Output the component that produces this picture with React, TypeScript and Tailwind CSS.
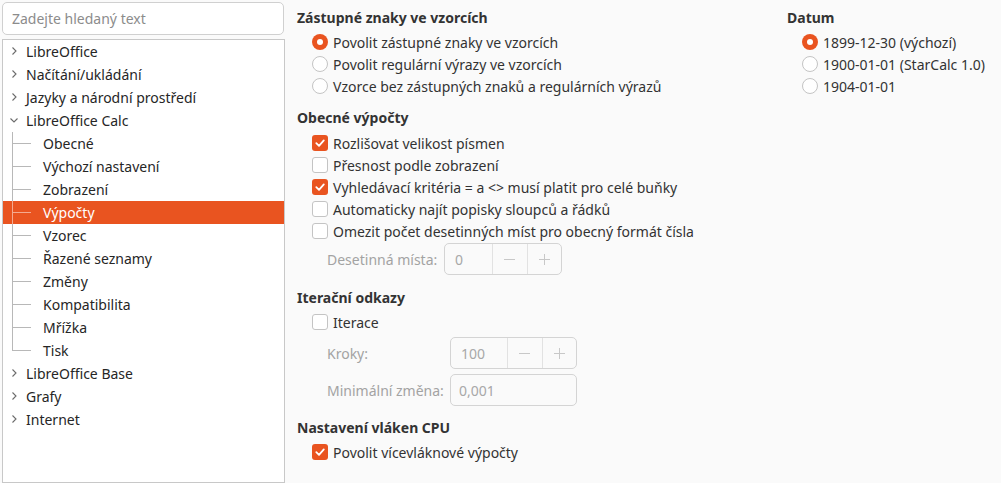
import React from 'react';

const ORANGE = 'bg-[#e95420]';

function Chevron({ open }: { open?: boolean }) {
  return (
    <svg width="10" height="10" viewBox="0 0 10 10" className="shrink-0">
      {open ? (
        <path d="M1.5 3.5 L5 7 L8.5 3.5" fill="none" stroke="#6b6b6b" strokeWidth="1.1" />
      ) : (
        <path d="M3.5 1.5 L7 5 L3.5 8.5" fill="none" stroke="#6b6b6b" strokeWidth="1.1" />
      )}
    </svg>
  );
}

function TopRow({ label, open }: { label: string; open?: boolean }) {
  return (
    <div className="flex h-[23px] items-center pl-[6px] text-[#262626]">
      <Chevron open={open} />
      <span className="ml-[7px]">{label}</span>
    </div>
  );
}

function ChildRow({ label, last, active }: { label: string; last?: boolean; active?: boolean }) {
  const line = active ? 'bg-white/50' : 'bg-[#b8b8b8]';
  return (
    <div className={`relative flex h-[23px] items-center ${active ? ORANGE + ' text-white' : 'text-[#262626]'}`}>
      <div className={`absolute left-[9px] top-0 w-px ${line} ${last ? 'h-[12px]' : 'h-full'}`} />
      <div className={`absolute left-[10px] top-[11px] h-px w-[18px] ${line}`} />
      <span className="ml-[40px]">{label}</span>
    </div>
  );
}

function Radio({ checked, label }: { checked?: boolean; label: string }) {
  return (
    <div className="flex h-[22px] items-center gap-[5px]">
      {checked ? (
        <span className={`flex h-[16px] w-[16px] items-center justify-center rounded-full ${ORANGE}`}>
          <span className="h-[6px] w-[6px] rounded-full bg-white" />
        </span>
      ) : (
        <span className="h-[16px] w-[16px] rounded-full border border-[#c4c4c4] bg-white" />
      )}
      <span>{label}</span>
    </div>
  );
}

function Check({ checked, label }: { checked?: boolean; label: string }) {
  return (
    <div className="flex h-[22px] items-center gap-[5px] whitespace-nowrap">
      {checked ? (
        <span className={`flex h-[16px] w-[16px] items-center justify-center rounded-[3px] ${ORANGE}`}>
          <svg width="12" height="12" viewBox="0 0 12 12">
            <path d="M2.3 6.2 L5 8.8 L9.8 3.4" fill="none" stroke="white" strokeWidth="1.8" strokeLinecap="round" strokeLinejoin="round" />
          </svg>
        </span>
      ) : (
        <span className="h-[16px] w-[16px] rounded-[3px] border border-[#c4c4c4] bg-white" />
      )}
      <span>{label}</span>
    </div>
  );
}

function Spin({ value, field }: { value: string; field: string }) {
  return (
    <div className="flex h-[32px] rounded-[5px] border border-[#d4d4d4] text-[#a8a8a8]">
      <div className={`flex items-center pl-[10px] ${field}`}>{value}</div>
      <div className="flex w-[35px] items-center justify-center border-l border-[#e2e2e2]">
        <span className="h-px w-[11px] bg-[#c8c8c8]" />
      </div>
      <div className="relative flex w-[35px] items-center justify-center border-l border-[#e2e2e2]">
        <span className="h-px w-[11px] bg-[#c8c8c8]" />
        <span className="absolute h-[11px] w-px bg-[#c8c8c8]" />
      </div>
    </div>
  );
}

function Heading({ children, className = '' }: { children: React.ReactNode; className?: string }) {
  return <div className={`flex h-[22px] items-center font-bold text-[#333] ${className}`}>{children}</div>;
}

export default function App() {
  return (
    <div
      className="flex h-[483px] w-[1001px] overflow-hidden bg-[#fafafa] text-[14px] text-[#333]"
      style={{ fontFamily: '"Noto Sans", "Open Sans", sans-serif' }}
    >
      {/* left: search + tree */}
      <div className="flex w-[285px] shrink-0 flex-col pl-[2px] pt-[2px]">
        <div className="flex h-[34px] w-[282px] items-center rounded-[5px] border border-[#d0d0d0] bg-white pl-[9px] text-[#8c8c8c]">
          Zadejte hledaný text
        </div>
        <div className="mt-[4px] h-[460px] w-[283px] border border-[#c8c8c8] bg-white">
          <TopRow label="LibreOffice" />
          <TopRow label="Načítání/ukládání" />
          <TopRow label="Jazyky a národní prostředí" />
          <TopRow label="LibreOffice Calc" open />
          <ChildRow label="Obecné" />
          <ChildRow label="Výchozí nastavení" />
          <ChildRow label="Zobrazení" />
          <ChildRow label="Výpočty" active />
          <ChildRow label="Vzorec" />
          <ChildRow label="Řazené seznamy" />
          <ChildRow label="Změny" />
          <ChildRow label="Kompatibilita" />
          <ChildRow label="Mřížka" />
          <ChildRow label="Tisk" last />
          <TopRow label="LibreOffice Base" />
          <TopRow label="Grafy" />
          <TopRow label="Internet" />
        </div>
      </div>

      {/* right: settings */}
      <div className="ml-[12px] flex">
        <div className="w-[490px] shrink-0 pt-[6px]">
          <Heading>Zástupné znaky ve vzorcích</Heading>
          <div className="ml-[15px] mt-[3px]">
            <Radio checked label="Povolit zástupné znaky ve vzorcích" />
            <Radio label="Povolit regulární výrazy ve vzorcích" />
            <Radio label="Vzorce bez zástupných znaků a regulárních výrazů" />
          </div>

          <Heading className="mt-[9px]">Obecné výpočty</Heading>
          <div className="ml-[15px] mt-[4px]">
            <Check checked label="Rozlišovat velikost písmen" />
            <Check label="Přesnost podle zobrazení" />
            <Check checked label="Vyhledávací kritéria = a <> musí platit pro celé buňky" />
            <Check label="Automaticky najít popisky sloupců a řádků" />
            <Check label="Omezit počet desetinných míst pro obecný formát čísla" />
            <div className="mt-px flex items-center">
              <span className="w-[132px] pl-[15px] text-[#a3a3a3]">Desetinná místa:</span>
              <div className="w-[118px]">
                <Spin value="0" field="w-[48px]" />
              </div>
            </div>
          </div>

          <Heading className="mt-[11px]">Iterační odkazy</Heading>
          <div className="ml-[15px] mt-[3px]">
            <Check label="Iterace" />
            <div className="mt-[4px] flex items-center">
              <span className="w-[138px] pl-[15px] text-[#a3a3a3]">Kroky:</span>
              <div className="w-[127px]">
                <Spin value="100" field="w-[57px]" />
              </div>
            </div>
            <div className="mt-[5px] flex items-center">
              <span className="w-[138px] pl-[15px] text-[#a3a3a3]">Minimální změna:</span>
              <div className="flex h-[32px] w-[127px] items-center rounded-[5px] border border-[#d4d4d4] pl-[8px] text-[#a8a8a8]">
                0,001
              </div>
            </div>
          </div>

          <Heading className="mt-[10px]">Nastavení vláken CPU</Heading>
          <div className="ml-[15px] mt-[3px]">
            <Check checked label="Povolit vícevláknové výpočty" />
          </div>
        </div>

        <div className="pt-[6px]">
          <Heading>Datum</Heading>
          <div className="ml-[15px] mt-[3px]">
            <Radio checked label="1899-12-30 (výchozí)" />
            <Radio label="1900-01-01 (StarCalc 1.0)" />
            <Radio label="1904-01-01" />
          </div>
        </div>
      </div>
    </div>
  );
}
